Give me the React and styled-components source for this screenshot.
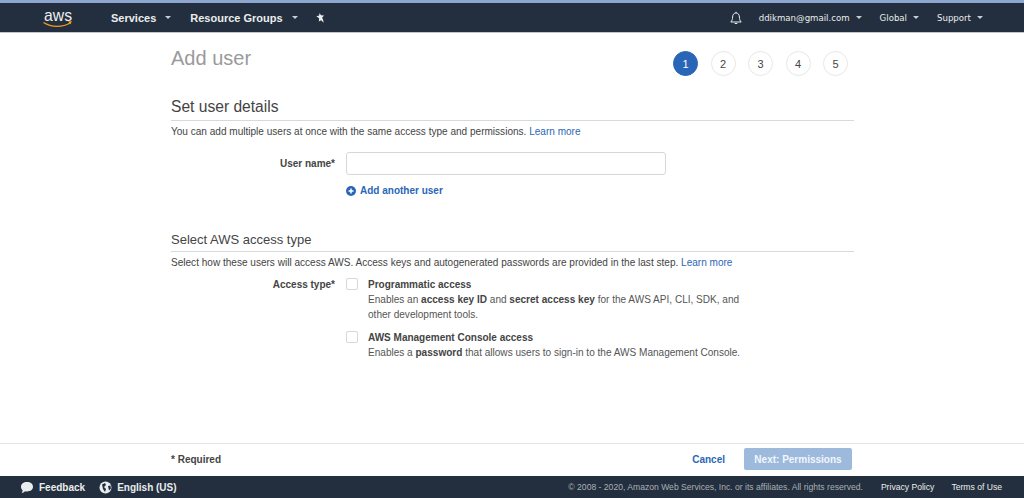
import React from "react";
import styled, { createGlobalStyle } from "styled-components";

const GlobalStyle = createGlobalStyle`
  html, body {
    margin: 0;
    padding: 0;
    background: #fff;
    font-family: "Liberation Sans", Arial, sans-serif;
  }
`;

const Page = styled.div`
  width: 1024px;
  height: 498px;
  display: flex;
  flex-direction: column;
  overflow: hidden;
  color: #444;
`;

const TopStrip = styled.div`
  height: 3px;
  background: #8ea5cf;
`;

const NavBar = styled.nav`
  height: 29px;
  flex: none;
  display: flex;
  align-items: center;
  padding: 0 41px 0 43px;
  background: #232f3e;
  border-bottom: 1px solid #c4c6c8;
  color: #eaeded;
`;

const LogoBox = styled.svg`
  width: 30px;
  height: 28px;
  margin-right: 38px;
  display: block;
`;

const NavItem = styled.div`
  display: flex;
  align-items: center;
  gap: ${(p) => (p.$light ? 6 : 9)}px;
  margin-right: ${(p) => p.$gap || 0}px;
  font-size: ${(p) => (p.$light ? 8.6 : 11)}px;
  font-weight: ${(p) => (p.$light ? 400 : 700)};
  font-family: ${(p) => (p.$light ? '"DejaVu Sans", sans-serif' : '"Liberation Sans", sans-serif')};
  white-space: nowrap;
`;

const Caret = styled.span`
  width: 0;
  height: 0;
  border-left: 3px solid transparent;
  border-right: 3px solid transparent;
  border-top: 3px solid #c8cfd2;
`;

const Spacer = styled.div`
  flex: 1;
`;

const Main = styled.main`
  flex: 1;
  width: 683px;
  margin-left: 171px;
  display: flex;
  flex-direction: column;
`;

const TitleRow = styled.div`
  height: 65px;
  flex: none;
  display: flex;
  justify-content: space-between;
  padding-right: 6px;
`;

const Title = styled.h1`
  margin: 13px 0 0;
  font-size: 20px;
  line-height: 24px;
  font-weight: 400;
  color: #9a9a9a;
`;

const Steps = styled.div`
  display: flex;
  gap: 12.5px;
  margin-top: 18px;
`;

const Step = styled.div`
  box-sizing: border-box;
  width: 25px;
  height: 25px;
  border-radius: 50%;
  display: flex;
  align-items: center;
  justify-content: center;
  font-size: 11px;
  border: 1px solid ${(p) => (p.$active ? "#2a66b8" : "#e6e8e8")};
  background: ${(p) => (p.$active ? "#2a66b8" : "#fff")};
  color: ${(p) => (p.$active ? "#fff" : "#444")};
`;

const SectionTitle = styled.h2`
  margin: ${(p) => p.$top || 0}px 0 0;
  padding-bottom: 4px;
  border-bottom: 1px solid #d5dbdb;
  font-weight: 400;
  color: #444;
  font-size: ${(p) => (p.$small ? 13 : 15.6)}px;
  line-height: ${(p) => (p.$small ? 14 : 18)}px;
`;

const Note = styled.p`
  margin: 4px 0 0;
  font-size: 10.06px;
  line-height: 13px;
  color: #444;
`;

const Link = styled.a`
  color: #2a66b8;
  font-weight: ${(p) => (p.$bold ? 700 : 400)};
`;

const FormRow = styled.div`
  display: grid;
  grid-template-columns: 164px 1fr;
  column-gap: 11px;
  margin-top: ${(p) => p.$top || 0}px;
`;

const Label = styled.label`
  font-size: 10px;
  line-height: 13px;
  font-weight: 700;
  color: #444;
  text-align: right;
  padding-top: ${(p) => p.$top || 0}px;
`;

const TextInput = styled.input`
  box-sizing: border-box;
  display: block;
  width: 320px;
  height: 23px;
  border: 1px solid #d5d8d8;
  border-radius: 3px;
  background: #fff;
`;

const AddLink = styled.div`
  display: flex;
  align-items: center;
  gap: 4px;
  margin-top: 9px;
  font-size: 10px;
  line-height: 13px;
  font-weight: 700;
  color: #2a66b8;
`;

const AddIcon = styled.svg`
  width: 10px;
  height: 10px;
`;

const OptionList = styled.div`
  display: flex;
  flex-direction: column;
  gap: 9px;
`;

const Option = styled.div`
  display: flex;
  gap: 10px;
`;

const Box = styled.span`
  box-sizing: border-box;
  flex: none;
  width: 12px;
  height: 12px;
  border: 1px solid #d5d8d8;
  border-radius: 2px;
`;

const OptionTitle = styled.div`
  font-size: 10px;
  line-height: 13px;
  font-weight: 700;
  color: #444;
`;

const OptionText = styled.div`
  width: 380px;
  margin-top: 1px;
  font-size: 10.06px;
  line-height: 15px;
  color: #555;

  b {
    color: #444;
  }
`;

const ActionBar = styled.div`
  height: 33px;
  flex: none;
  box-sizing: border-box;
  display: flex;
  align-items: center;
  padding: 0 172px 2px 171px;
  border-top: 1px solid #e4e6e6;
  font-size: 10px;
  font-weight: 700;
`;

const Next = styled.div`
  width: 108px;
  height: 22px;
  margin-left: 19px;
  display: flex;
  align-items: center;
  justify-content: center;
  border-radius: 2px;
  background: #9dbadd;
  color: #f2f6fb;
  font-size: 10px;
`;

const Footer = styled.footer`
  height: 22px;
  flex: none;
  display: flex;
  align-items: center;
  padding: 0 22px 0 20px;
  background: #232f3e;
  color: #eaeded;
`;

const FooterLink = styled.span`
  display: flex;
  align-items: center;
  gap: 5px;
  margin-right: ${(p) => p.$gap || 0}px;
  font-weight: ${(p) => (p.$bold ? 700 : 400)};
  font-size: ${(p) => (p.$small ? 8.6 : 10)}px;
  color: ${(p) => (p.$dim ? "#aab0b5" : "#eaeded")};
`;

const SmallIcon = styled.svg`
  width: ${(p) => p.$w || 14}px;
  height: ${(p) => p.$h || 13}px;
  margin-right: ${(p) => p.$gap || 0}px;
`;

function AwsLogo() {
  return (
    <LogoBox viewBox="0 0 30 28">
      <text x="1" y="16.500" fontSize="17" textLength="28" lengthAdjust="spacingAndGlyphs" fontFamily="Liberation Sans" fill="#eee">aws</text>
      <path d="M0.500 18.500c8 5 19 5 26.500 .5" stroke="#f19a1f" strokeWidth="1.300" fill="none" />
      <path d="M25 17.500l3.700-.5-1 3.400z" fill="#f19a1f" />
    </LogoBox>
  );
}

export default function App() {
  return (
    <Page>
      <GlobalStyle />
      <TopStrip />
      <NavBar>
        <AwsLogo />
        <NavItem $gap={19}>Services <Caret /></NavItem>
        <NavItem $gap={17}>Resource Groups <Caret /></NavItem>
        <SmallIcon viewBox="0 0 12 12" $w={11} $h={12}>
          <path d="M5 .5l1.500 2.600 3.400.3-2.200 2.300 1.100 1.800.6 3.800L6.700 8.500 4.200 9.900 4.500 6.300 1.500 4l3-.8z" fill="#eaeded" />
        </SmallIcon>
        <Spacer />
        <SmallIcon viewBox="0 0 14 14" $w={14} $h={14} $gap={16}>
          <path d="M1.800 11c1.500-1.500 1.700-3 1.800-5C3.700 3.500 5 2 7 2s3.300 1.500 3.400 4c.1 2 .3 3.500 1.800 5zM7 .8V2M5.700 12.500h2.600" stroke="#eaeded" fill="none" />
        </SmallIcon>
        <NavItem $light $gap={18}>ddikman@gmail.com <Caret /></NavItem>
        <NavItem $light $gap={18}>Global <Caret /></NavItem>
        <NavItem $light>Support <Caret /></NavItem>
      </NavBar>
      <Main>
        <TitleRow>
          <Title>Add user</Title>
          <Steps>
            {[1, 2, 3, 4, 5].map((n) => (
              <Step key={n} $active={n === 1}>{n}</Step>
            ))}
          </Steps>
        </TitleRow>
        <SectionTitle>Set user details</SectionTitle>
        <Note>You can add multiple users at once with the same access type and permissions. <Link>Learn more</Link></Note>
        <FormRow $top={14}>
          <Label $top={5}>User name*</Label>
          <div>
            <TextInput />
            <AddLink>
              <AddIcon viewBox="0 0 10 10">
                <circle cx="5" cy="5" r="5" fill="#2a66b8" />
                <path d="M5 2.500v5M2.500 5h5" stroke="#fff" strokeWidth="1.500" />
              </AddIcon>
              Add another user
            </AddLink>
          </div>
        </FormRow>
        <SectionTitle $small $top={36}>Select AWS access type</SectionTitle>
        <Note>Select how these users will access AWS. Access keys and autogenerated passwords are provided in the last step. <Link>Learn more</Link></Note>
        <FormRow $top={9}>
          <Label>Access type*</Label>
          <OptionList>
            <Option>
              <Box />
              <div>
                <OptionTitle>Programmatic access</OptionTitle>
                <OptionText>Enables an <b>access key ID</b> and <b>secret access key</b> for the AWS API, CLI, SDK, and other development tools.</OptionText>
              </div>
            </Option>
            <Option>
              <Box />
              <div>
                <OptionTitle>AWS Management Console access</OptionTitle>
                <OptionText>Enables a <b>password</b> that allows users to sign-in to the AWS Management Console.</OptionText>
              </div>
            </Option>
          </OptionList>
        </FormRow>
      </Main>
      <ActionBar>
        <span>* Required</span>
        <Spacer />
        <Link $bold>Cancel</Link>
        <Next>Next: Permissions</Next>
      </ActionBar>
      <Footer>
        <FooterLink $bold $gap={14}>
          <SmallIcon viewBox="0 0 14 13">
            <path d="M7 1c3.500 0 6 2 6 4.800S10.500 10.500 7 10.500c-.8 0-1.500-.1-2-.3C4 11.200 3 11.800 1.500 12c.7-.8 1-1.700 1.100-2.800C1.500 8.300 1 7.200 1 5.800 1 3 3.500 1 7 1z" fill="#eaeded" />
          </SmallIcon>
          Feedback
        </FooterLink>
        <FooterLink $bold>
          <SmallIcon viewBox="0 0 13 13" $w={13}>
            <circle cx="6.500" cy="6.500" r="6" fill="#eaeded" />
            <path d="M3 3.500l3-1.500 1 2-2 2 2 2-1 3-2-3zM9 5l2.500-.5.500 3-2 2z" fill="#232f3e" />
          </SmallIcon>
          English (US)
        </FooterLink>
        <Spacer />
        <FooterLink $small $dim $gap={18}>© 2008 - 2020, Amazon Web Services, Inc. or its affiliates. All rights reserved.</FooterLink>
        <FooterLink $small $gap={17}>Privacy Policy</FooterLink>
        <FooterLink $small>Terms of Use</FooterLink>
      </Footer>
    </Page>
  );
}
